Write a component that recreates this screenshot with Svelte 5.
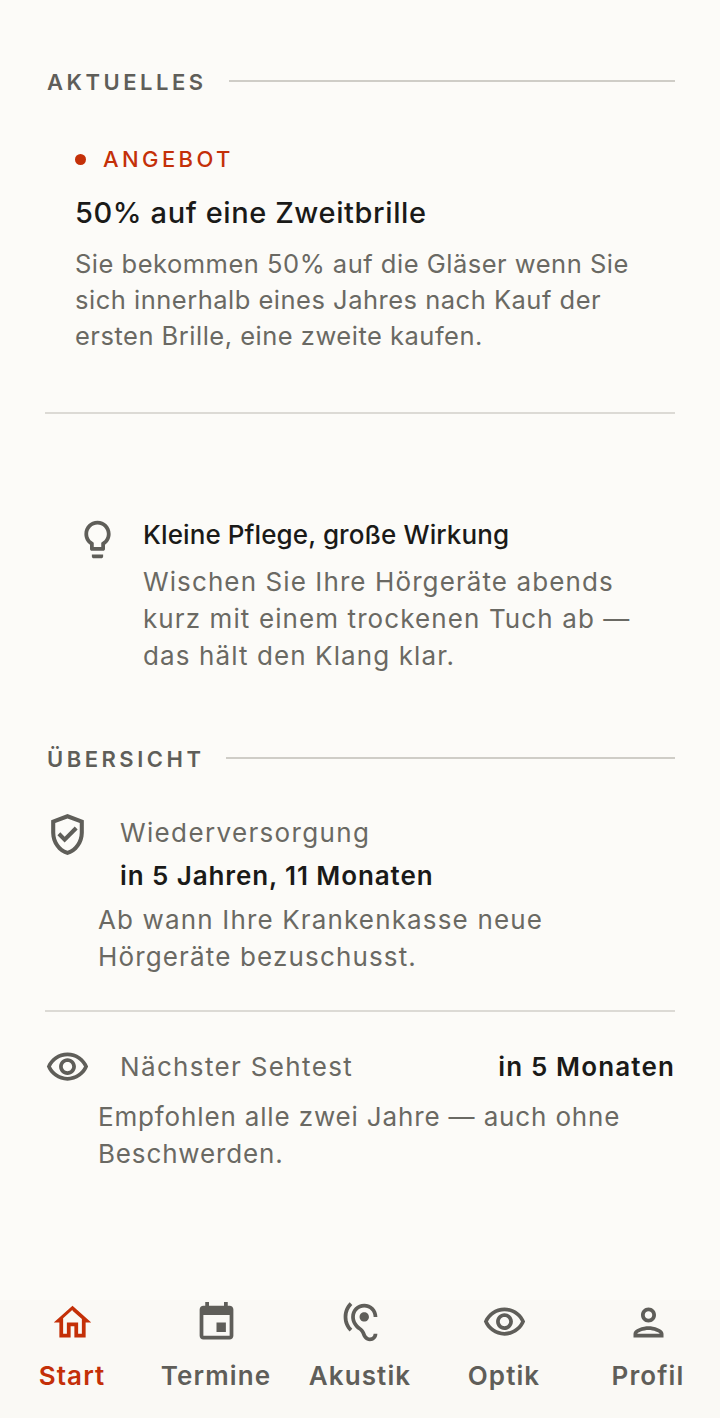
<script>
  const navItems = [
    { label: 'Start', active: true, d: 'M12 5.69l5 4.5V18h-2v-6H9v6H7v-8.31l5-4.5M12 3L2 12h3v8h6v-6h2v6h6v-8h3L12 3z' },
    { label: 'Termine', d: 'M17 12h-5v5h5v-5zM16 1v2H8V1H6v2H5c-1.11 0-1.99.9-1.99 2L3 19c0 1.1.89 2 2 2h14c1.1 0 2-.9 2-2V5c0-1.1-.9-2-2-2h-1V1h-2zm3 18H5V8h14v11z' },
    { label: 'Akustik', d: 'M17 20c-.29 0-.56-.06-.76-.15-.71-.37-1.21-.88-1.71-2.38-.51-1.56-1.47-2.29-2.39-3-.79-.61-1.61-1.24-2.32-2.53C9.29 10.98 9 9.93 9 9c0-2.8 2.2-5 5-5s5 2.2 5 5h2c0-3.93-3.07-7-7-7S7 5.07 7 9c0 1.26.38 2.65 1.07 3.9.91 1.65 1.98 2.48 2.85 3.15.81.62 1.39 1.07 1.71 2.05.6 1.82 1.37 2.84 2.73 3.55.51.23 1.07.35 1.64.35 2.21 0 4-1.79 4-4h-2c0 1.1-.9 2-2 2zM7.64 2.64L6.22 1.22C4.23 3.21 3 5.96 3 9s1.23 5.79 3.22 7.78l1.41-1.41C6.01 13.74 5 11.49 5 9s1.01-4.74 2.64-6.36zM11.5 9c0 1.38 1.12 2.5 2.5 2.5s2.5-1.12 2.5-2.5-1.12-2.5-2.5-2.5-2.5 1.12-2.5 2.5z' },
    { label: 'Optik', d: eyePath() },
    { label: 'Profil', d: 'M12 6c1.1 0 2 .9 2 2s-.9 2-2 2-2-.9-2-2 .9-2 2-2m0 10c2.7 0 5.8 1.29 6 2H6c.23-.72 3.31-2 6-2m0-12C9.79 4 8 5.79 8 8s1.79 4 4 4 4-1.79 4-4-1.79-4-4-4zm0 10c-2.67 0-8 1.34-8 4v2h16v-2c0-2.66-5.33-4-8-4z' }
  ];

  function eyePath() {
    return 'M12 6c3.79 0 7.17 2.13 8.82 5.5C19.17 14.87 15.79 17 12 17s-7.17-2.13-8.82-5.5C4.83 8.13 8.21 6 12 6m0-2C7 4 2.73 7.11 1 11.5 2.73 15.89 7 19 12 19s9.27-3.11 11-7.5C21.27 7.11 17 4 12 4zm0 5c1.38 0 2.5 1.12 2.5 2.5S13.38 14 12 14s-2.5-1.12-2.5-2.5S10.62 9 12 9m0-2c-2.48 0-4.5 2.02-4.5 4.5S9.52 16 12 16s4.5-2.02 4.5-4.5S14.48 7 12 7z';
  }
</script>

<div class="page">
  <main class="content">
    <div class="section-head first">
      <span>AKTUELLES</span>
      <i></i>
    </div>

    <article class="offer">
      <div class="tag"><b></b>ANGEBOT</div>
      <h2>50% auf eine Zweitbrille</h2>
      <p>Sie bekommen 50% auf die Gläser wenn Sie sich innerhalb eines Jahres nach Kauf der ersten Brille, eine zweite kaufen.</p>
    </article>

    <article class="tip">
      <svg class="icon" viewBox="0 0 24 24"><path d="M9 21c0 .55.45 1 1 1h4c.55 0 1-.45 1-1v-1H9v1zm3-19C8.14 2 5 5.14 5 9c0 2.38 1.19 4.47 3 5.74V17c0 .55.45 1 1 1h6c.55 0 1-.45 1-1v-2.26c1.81-1.27 3-3.36 3-5.74 0-3.86-3.14-7-7-7zm2.85 11.1l-.85.6V16h-4v-2.3l-.85-.6C7.8 12.16 7 10.63 7 9c0-2.76 2.24-5 5-5s5 2.24 5 5c0 1.63-.8 3.16-2.15 4.1z" /></svg>
      <div>
        <h3>Kleine Pflege, große Wirkung</h3>
        <p>Wischen Sie Ihre Hörgeräte abends kurz mit einem trockenen Tuch ab — das hält den Klang klar.</p>
      </div>
    </article>

    <div class="section-head">
      <span>ÜBERSICHT</span>
      <i></i>
    </div>

    <section class="row stacked">
      <div class="row-top">
        <svg class="icon shield" viewBox="0 0 24 24"><path d="M12 2L4 5v6.09c0 5.05 3.41 9.76 8 10.91 4.59-1.15 8-5.86 8-10.91V5l-8-3zm6 9.09c0 4-2.55 7.7-6 8.83-3.45-1.13-6-4.82-6-8.83v-4.7l6-2.25 6 2.25v4.7zM8.48 10.94 7.07 12.35 10.6 15.89 16.97 9.53 15.55 8.11 10.6 13.06z" /></svg>
        <div>
          <div class="label">Wiederversorgung</div>
          <div class="value">in 5 Jahren, 11 Monaten</div>
        </div>
      </div>
      <p>Ab wann Ihre Krankenkasse neue Hörgeräte bezuschusst.</p>
    </section>

    <section class="row">
      <div class="row-top inline">
        <svg class="icon eye" viewBox="0 0 24 24"><path d={eyePath()} /></svg>
        <div class="label">Nächster Sehtest</div>
        <div class="value">in 5 Monaten</div>
      </div>
      <p class="tight">Empfohlen alle zwei Jahre — auch ohne Beschwerden.</p>
    </section>
  </main>

  <nav>
    {#each navItems as item}
      <div class="nav-item" class:active={item.active}>
        <svg class="icon" viewBox="0 0 24 24"><path d={item.d} /></svg>
        <span>{item.label}</span>
      </div>
    {/each}
  </nav>
</div>

<style>
  :global(body) {
    margin: 0;
    background: #fbfaf7;
  }

  .page {
    height: 1418px;
    display: flex;
    flex-direction: column;
    font-family: Inter, "Liberation Sans", sans-serif;
    color: #1a1a18;
    background: #fcfbf8;
    overflow: hidden;
  }

  .content {
    flex: 1;
    padding: 0 45px;
  }

  .section-head {
    display: flex;
    align-items: center;
    gap: 22px;
    font-size: 22px;
    font-weight: 600;
    letter-spacing: 3.5px;
    color: #5f5e59;
    height: 30px;
  }

  .section-head.first {
    margin-top: 67px;
  }

  .section-head span {
    padding-left: 2px;
  }

  .section-head i {
    flex: 1;
    height: 2px;
    background: #cfcdc7;
    margin-top: -3px;
  }

  p {
    margin: 0;
    color: #6a6963;
  }

  .offer {
    padding: 47px 30px 58px 30px;
    border-bottom: 2px solid #dcdad5;
  }

  .tag {
    display: flex;
    align-items: center;
    gap: 17px;
    font-size: 22px;
    font-weight: 500;
    letter-spacing: 3.4px;
    line-height: 30px;
    color: #c43008;
  }

  .tag b {
    width: 11px;
    height: 11px;
    border-radius: 50%;
    background: #c43008;
  }

  h2 {
    margin: 20px 0 14px;
    font-size: 29px;
    line-height: 38px;
    font-weight: 500;
    letter-spacing: 0.6px;
  }

  .offer p {
    font-size: 25.5px;
    line-height: 36px;
    letter-spacing: 0.5px;
  }

  .tip {
    display: flex;
    gap: 23px;
    padding: 103px 30px 0 30px;
  }

  .icon {
    width: 45px;
    height: 45px;
    flex: none;
    fill: #5f5e59;
  }

  h3 {
    margin: 0 0 10px;
    font-size: 26px;
    line-height: 36px;
    font-weight: 500;
    letter-spacing: 0.1px;
  }

  .tip p {
    font-size: 26px;
    line-height: 37px;
    letter-spacing: 1.1px;
  }

  .tip + .section-head {
    margin-top: 70px;
  }

  .row {
    padding: 0 0 35px;
  }

  .stacked {
    margin-top: 41px;
    border-bottom: 2px solid #dcdad5;
  }

  .row-top {
    display: flex;
    gap: 30px;
  }

  .shield {
    width: 49px;
    height: 49px;
    margin: -5px -2px 0 -2px;
  }

  .eye {
    margin-top: 2px;
  }

  .inline {
    align-items: center;
    padding-top: 31px;
  }

  .label {
    font-size: 26px;
    line-height: 36px;
    color: #6a6963;
    letter-spacing: 1.35px;
  }

  .value {
    margin-top: 7px;
    font-size: 26px;
    line-height: 36px;
    font-weight: 600;
    letter-spacing: 0.9px;
  }

  .inline .value {
    margin: 0 0 0 auto;
    letter-spacing: 1.15px;
  }

  .row p {
    font-size: 26px;
    line-height: 37px;
    letter-spacing: 1.15px;
    padding-left: 53px;
    margin-top: 7px;
  }

  .row p.tight {
    letter-spacing: 0.85px;
    margin-top: 8px;
  }

  nav {
    display: flex;
    padding-bottom: 24px;
    background: #faf9f5;
  }

  .nav-item {
    flex: 1;
    display: flex;
    flex-direction: column;
    align-items: center;
    gap: 13px;
    font-size: 26px;
    font-weight: 600;
    line-height: 36px;
    letter-spacing: 1.1px;
    color: #5f5e59;
  }

  .nav-item.active {
    color: #c43008;
  }

  .nav-item.active .icon {
    fill: #c43008;
  }
</style>
